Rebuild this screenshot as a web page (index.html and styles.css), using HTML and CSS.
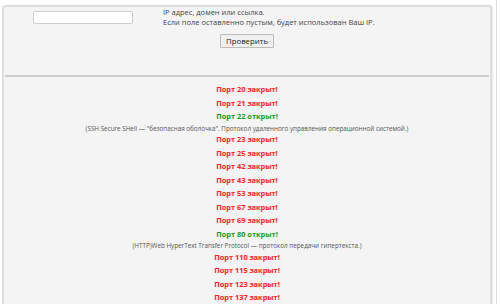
FILE: index.html
```html
<!DOCTYPE html>
<html lang="ru">
<head>
    <meta charset="UTF-8">
    <title>Проверка портов</title>
    <link rel="stylesheet" href="styles.css">
</head>
<body>
    <div class="page">
        <div class="panel">
            <form class="check-form" onsubmit="return false;">
                <div class="form-row">
                    <div class="field"><input type="text" id="host"></div>
                    <div class="hint">
                        IP адрес, домен или ссылка.<br>
                        Если поле оставленно пустым, будет использован Ваш IP.
                    </div>
                </div>
                <div class="actions"><button type="submit">Проверить</button></div>
            </form>
            <hr class="divider">
            <div class="results">
                <p class="port closed">Порт 20 закрыт!</p>
                <p class="port closed">Порт 21 закрыт!</p>
                <p class="port open">Порт 22 открыт!</p>
                <p class="desc">(SSH Secure SHell — "безопасная оболочка". Протокол удаленного управления операционной системой.)</p>
                <p class="port closed">Порт 23 закрыт!</p>
                <p class="port closed">Порт 25 закрыт!</p>
                <p class="port closed">Порт 42 закрыт!</p>
                <p class="port closed">Порт 43 закрыт!</p>
                <p class="port closed">Порт 53 закрыт!</p>
                <p class="port closed">Порт 67 закрыт!</p>
                <p class="port closed">Порт 69 закрыт!</p>
                <p class="port open">Порт 80 открыт!</p>
                <p class="desc">(HTTP)Web HyperText Transfer Protocol — протокол передачи гипертекста.)</p>
                <p class="port closed">Порт 110 закрыт!</p>
                <p class="port closed">Порт 115 закрыт!</p>
                <p class="port closed">Порт 123 закрыт!</p>
                <p class="port closed">Порт 137 закрыт!</p>
            </div>
        </div>
    </div>
</body>
</html>
```
FILE: styles.css
```css
body { margin: 0; background: #fff; font-family: "Open Sans", "DejaVu Sans", sans-serif; color: #333; overflow: hidden; }
.page { width: 497px; height: 304px; border-right: 1px solid #ddd; padding: 5px 0 0 2px; box-sizing: border-box; overflow: hidden; }
.panel { width: 490px; min-height: 400px; background: #f4f4f4; border: 2px solid #ddd; border-radius: 4px; box-sizing: border-box; box-shadow: 1px 0 2px rgba(0,0,0,0.1); }
.check-form { height: 68px; margin: 0; }
.form-row { display: flex; }
.field { width: 159px; padding: 4px 0 0 29px; box-sizing: border-box; line-height: 0; }
.field input { display: block; width: 100px; height: 13px; padding: 0; margin: 0; border: 1px solid #ccc; border-radius: 2px; background: #fff; box-sizing: border-box; }
.hint { font-size: 7.5px; line-height: 10px; color: #444; }
.actions { text-align: center; padding-top: 7px; line-height: 0; }
.actions button { font-family: inherit; font-size: 7.8px; color: #222; padding: 0 5px; height: 14px; line-height: 12px; background: #f0f0f0; border: 1px solid #bbb; border-radius: 1px; }
.divider { margin: 0 1px; border: none; border-top: 2px solid #ccc; height: 0; }
.results { text-align: center; padding-top: 6px; }
.port { margin: 0; font-size: 7.4px; font-weight: bold; line-height: 13.5px; }
.closed { color: #f22; }
.open { color: #1b9a1b; }
.desc { margin: 0 0 0.5px; font-size: 6.3px; line-height: 9px; color: #555; }
```
